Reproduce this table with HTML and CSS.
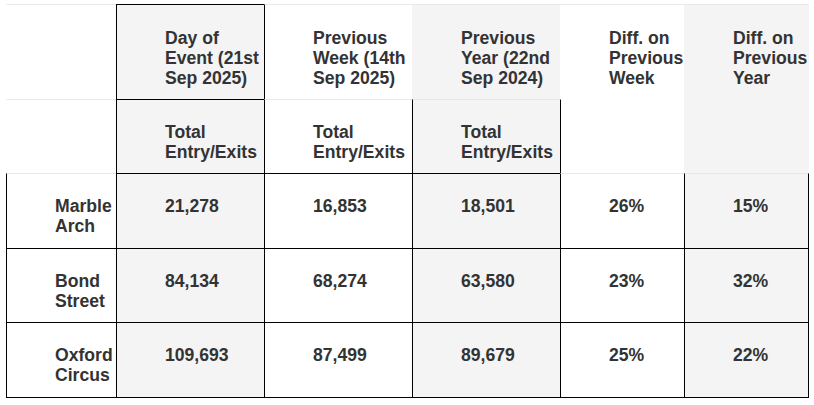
FILE: index.html
```html
<!DOCTYPE html>
<html lang="en">
<head>
<meta charset="utf-8">
<title>Station Entry/Exits</title>
<link rel="stylesheet" href="styles.css">
</head>
<body>
<div class="page">
<table class="stats">
  <colgroup>
    <col class="w-station">
    <col class="w-num">
    <col class="w-num">
    <col class="w-num">
    <col class="w-diff">
    <col class="w-diff2">
  </colgroup>
  <thead>
    <tr class="head-1">
      <th class="lt"></th>
      <th class="shade box-top">Day of<br>Event (21st<br>Sep 2025)</th>
      <th class="lt bl">Previous<br>Week (14th<br>Sep 2025)</th>
      <th class="lt shade">Previous<br>Year (22nd<br>Sep 2024)</th>
      <th class="lt">Diff. on<br>Previous<br>Week</th>
      <th class="lt shade">Diff. on<br>Previous<br>Year</th>
    </tr>
    <tr class="head-2">
      <th class="lt"></th>
      <th class="shade box-top">Total<br>Entry/Exits</th>
      <th class="lt bl">Total<br>Entry/Exits</th>
      <th class="lt bl shade">Total<br>Entry/Exits</th>
      <th class="bl"></th>
      <th class="shade"></th>
    </tr>
  </thead>
  <tbody>
    <tr class="body-1">
      <th class="lt bl">Marble<br>Arch</th>
      <td class="shade">21,278</td>
      <td>16,853</td>
      <td class="shade">18,501</td>
      <td class="lt">26%</td>
      <td class="lt shade">15%</td>
    </tr>
    <tr class="body-2">
      <th class="bl">Bond<br>Street</th>
      <td class="shade">84,134</td>
      <td>68,274</td>
      <td class="shade">63,580</td>
      <td>23%</td>
      <td class="shade">32%</td>
    </tr>
    <tr class="body-3">
      <th class="bl">Oxford<br>Circus</th>
      <td class="shade">109,693</td>
      <td>87,499</td>
      <td class="shade">89,679</td>
      <td>25%</td>
      <td class="shade">22%</td>
    </tr>
  </tbody>
</table>
</div>
</body>
</html>
```

FILE: styles.css
```css
html, body {
  margin: 0;
  padding: 0;
  background: #ffffff;
}

.page {
  padding: 4px 0 0 6px;
}

.stats {
  border-collapse: separate;
  border-spacing: 0;
  table-layout: fixed;
  width: 803px;
  font-family: "Liberation Sans", Arial, sans-serif;
  font-size: 17.6px;
  line-height: 20px;
  font-weight: bold;
  color: #333333;
}

.w-station { width: 110px; }
.w-num { width: 148px; }
.w-diff { width: 124px; }
.w-diff2 { width: 125px; }

.stats th,
.stats td {
  text-align: left;
  vertical-align: top;
  white-space: nowrap;
  padding: 22px 0 0 48px;
  border-top: 1px solid #000000;
  border-left: 1px solid #000000;
  border-right: 0;
  border-bottom: 0;
  font-weight: bold;
  overflow: visible;
}

.stats thead th {
  border-top-color: #e8e8e8;
  border-left-color: transparent;
}

.stats .head-1 th {
  padding-top: 23px;
}

.stats .head-2 th:nth-child(5),
.stats .head-2 th:nth-child(6) {
  border-top-color: transparent;
}

.stats thead th.box-top {
  border-top-color: #000000;
  border-left-color: #000000;
}

.stats thead th.bl {
  border-left-color: #000000;
}

.stats .head-2 th.lt:first-child {
  border-top-color: #e8e8e8;
}

.stats .body-1 .lt {
  border-top-color: #e8e8e8;
}

.stats tbody tr:last-child th,
.stats tbody tr:last-child td {
  border-bottom: 1px solid #000000;
}

.stats tbody td:last-child {
  border-right: 1px solid #000000;
}

.shade {
  background: #f4f4f4;
}

.head-1 { height: 95px; }
.head-2 { height: 74px; }
.body-1 { height: 75px; }
.body-2 { height: 74px; }
.body-3 { height: 76px; }
```
